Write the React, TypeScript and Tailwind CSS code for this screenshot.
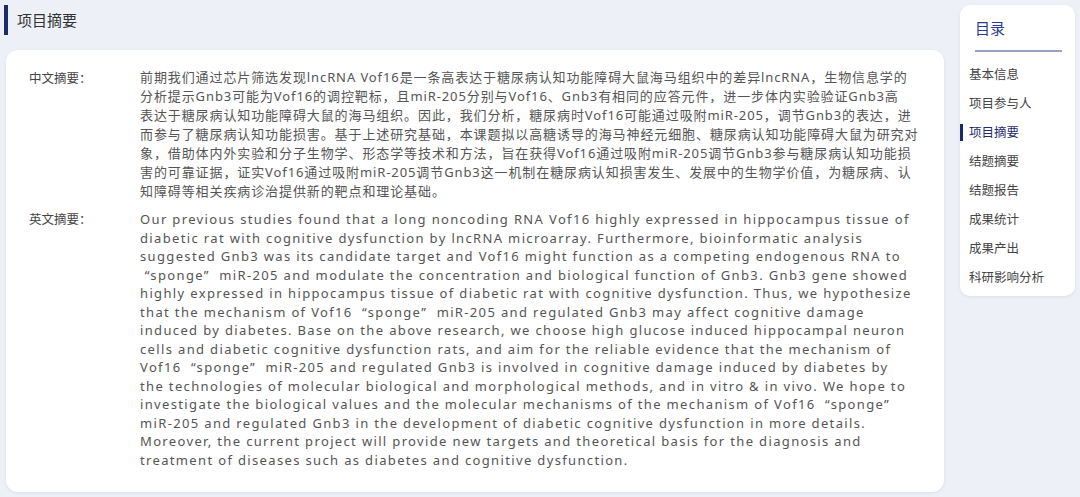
import React from "react";

const zh = [
  "前期我们通过芯片筛选发现lncRNA Vof16是一条高表达于糖尿病认知功能障碍大鼠海马组织中的差异lncRNA，生物信息学的",
  "分析提示Gnb3可能为Vof16的调控靶标，且miR-205分别与Vof16、Gnb3有相同的应答元件，进一步体内实验验证Gnb3高",
  "表达于糖尿病认知功能障碍大鼠的海马组织。因此，我们分析，糖尿病时Vof16可能通过吸附miR-205，调节Gnb3的表达，进",
  "而参与了糖尿病认知功能损害。基于上述研究基础，本课题拟以高糖诱导的海马神经元细胞、糖尿病认知功能障碍大鼠为研究对",
  "象，借助体内外实验和分子生物学、形态学等技术和方法，旨在获得Vof16通过吸附miR-205调节Gnb3参与糖尿病认知功能损",
  "害的可靠证据，证实Vof16通过吸附miR-205调节Gnb3这一机制在糖尿病认知损害发生、发展中的生物学价值，为糖尿病、认",
  "知障碍等相关疾病诊治提供新的靶点和理论基础。",
];

const en = [
  "Our previous studies found that a long noncoding RNA Vof16 highly expressed in hippocampus tissue of",
  "diabetic rat with cognitive dysfunction by lncRNA microarray. Furthermore, bioinformatic analysis",
  "suggested Gnb3 was its candidate target and Vof16 might function as a competing endogenous RNA to",
  "\u00a0\u201csponge\u201d\u00a0 miR-205 and modulate the concentration and biological function of Gnb3. Gnb3 gene showed",
  "highly expressed in hippocampus tissue of diabetic rat with cognitive dysfunction. Thus, we hypothesize",
  "that the mechanism of Vof16 \u00a0\u201csponge\u201d\u00a0 miR-205 and regulated Gnb3 may affect cognitive damage",
  "induced by diabetes. Base on the above research, we choose high glucose induced hippocampal neuron",
  "cells and diabetic cognitive dysfunction rats, and aim for the reliable evidence that the mechanism of",
  "Vof16 \u00a0\u201csponge\u201d\u00a0 miR-205 and regulated Gnb3 is involved in cognitive damage induced by diabetes by",
  "the technologies of molecular biological and morphological methods, and in vitro & in vivo. We hope to",
  "investigate the biological values and the molecular mechanisms of the mechanism of Vof16 \u00a0\u201csponge\u201d",
  "miR-205 and regulated Gnb3 in the development of diabetic cognitive dysfunction in more details.",
  "Moreover, the current project will provide new targets and theoretical basis for the diagnosis and",
  "treatment of diseases such as diabetes and cognitive dysfunction.",
];

const nav = ["基本信息", "项目参与人", "项目摘要", "结题摘要", "结题报告", "成果统计", "成果产出", "科研影响分析"];

const font = { fontFamily: '"Noto Sans", "Noto Sans CJK SC", sans-serif' };

export default function App() {
  return (
    <div
      className="w-[1080px] h-[497px] bg-[#edf0f7] flex overflow-hidden"
      style={font}
    >
      <div className="w-[955px] flex flex-col">
        <div className="h-[50px] flex items-start pt-[5px] pl-[4px]">
          <div className="w-[4px] h-[30px] bg-[#1b2a6b]" />
          <div className="ml-[9px] text-[15px] leading-[30px] text-[#333]">项目摘要</div>
        </div>
        <div className="ml-[6px] w-[938px] h-[442px] bg-white rounded-[12px] pl-[23px] pt-[18px] shadow-[0_1px_3px_rgba(120,130,170,0.15)]">
          <div className="flex">
            <div className="w-[111px] text-[12.5px] leading-[19px] text-[#444]" style={{ fontFamily: '"Noto Sans CJK SC", sans-serif' }}>
              中文摘要：
            </div>
            <div className="text-[13px] leading-[19px] text-[#555] tracking-[0.9px]" style={{ fontFamily: '"Noto Sans", "Noto Sans CJK SC", sans-serif' }}>
              {zh.map((l, i) => (
                <div key={i} className="whitespace-nowrap">{l}</div>
              ))}
            </div>
          </div>
          <div className="flex mt-[9px]">
            <div className="w-[111px] text-[12.5px] leading-[18.5px] text-[#444]" style={{ fontFamily: '"Noto Sans CJK SC", sans-serif' }}>
              英文摘要：
            </div>
            <div className="text-[13px] leading-[18.5px] text-[#555] tracking-[1.35px]">
              {en.map((l, i) => (
                <div key={i} className="whitespace-nowrap">{l}</div>
              ))}
            </div>
          </div>
        </div>
      </div>
      <div className="ml-[5px] mt-[5px] w-[115px] h-[291px] bg-white rounded-[10px] flex flex-col shadow-[0_1px_3px_rgba(120,130,170,0.15)]" style={{ fontFamily: '"Noto Sans CJK SC", sans-serif' }}>
        <div className="pl-[15px] pt-[12px] text-[15px] leading-[22px] text-[#2b3a8c]">目录</div>
        <div className="ml-[15px] mt-[11px] w-[87px] h-[2px] bg-[#9aa0c2]" />
        <div className="flex flex-col mt-[8px]">
          {nav.map((n, i) => {
            const active = n === "项目摘要";
            return (
              <div key={i} className="flex items-center h-[29px]">
                <div className={active ? "w-[3px] h-[17px] bg-[#1b2a6b]" : "w-[3px] h-[17px]"} />
                <div className={"ml-[6px] text-[12.5px] " + (active ? "text-[#1f2d6e]" : "text-[#444]")}>{n}</div>
              </div>
            );
          })}
        </div>
      </div>
    </div>
  );
}
